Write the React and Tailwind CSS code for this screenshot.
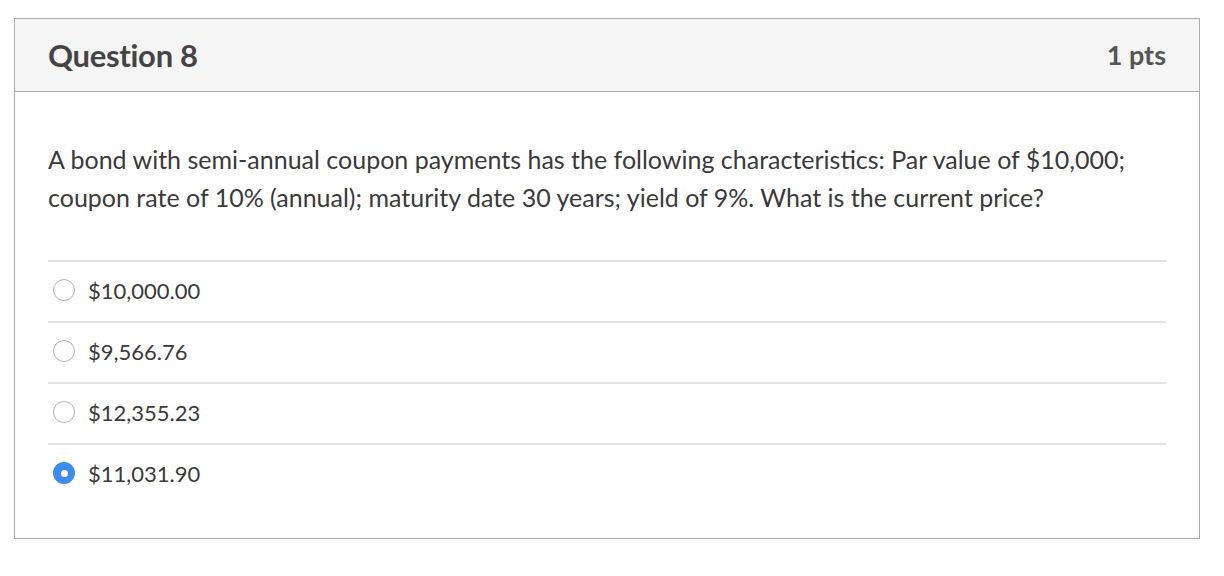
const answers = [
  { id: 'a', label: '$10,000.00' },
  { id: 'b', label: '$9,566.76' },
  { id: 'c', label: '$12,355.23' },
  { id: 'd', label: '$11,031.90', selected: true },
];

const Radio = ({ checked }) =>
  checked ? (
    <span className="w-[22px] h-[22px] rounded-full bg-[#3b8df2] flex items-center justify-center shrink-0">
      <span className="w-[7px] h-[7px] rounded-full bg-white" />
    </span>
  ) : (
    <span className="w-[22px] h-[22px] rounded-full border border-[#b5b5b5] bg-white shrink-0" />
  );

const App = () => {
  return (
    <div className="w-[1224px] h-[576px] bg-white pt-[18px] pl-[14px]" style={{ fontFamily: 'Lato, "Open Sans", sans-serif' }}>
      <div className="w-[1186px] h-[521px] border border-[#ababab] flex flex-col">
        <div className="h-[73px] bg-[#f5f5f5] border-b border-[#ababab] px-[33px] flex items-center justify-between">
          <h2 className="text-[31px] font-bold text-[#444] tracking-[-0.3px]">Question 8</h2>
          <span className="text-[27px] font-bold text-[#555]">1 pts</span>
        </div>
        <div className="px-[33px] pt-[48px]">
          <p className="text-[25px] leading-[38px] text-[#3a3a3a]">
            A bond with semi-annual coupon payments has the following characteristics: Par value of $10,000; coupon rate of 10% (annual); maturity date 30 years; yield of 9%. What is the current price?
          </p>
          <div className="mt-[44px]">
            {answers.map(a => (
              <div key={a.id} className="h-[61px] border-t-2 border-[#e2e2e2] flex items-center pl-[5px] pb-[3px] gap-[13px]">
                <Radio checked={a.selected} />
                <span className="text-[22px] text-[#3a3a3a]">{a.label}</span>
              </div>
            ))}
          </div>
        </div>
      </div>
    </div>
  );
};

export default App;
